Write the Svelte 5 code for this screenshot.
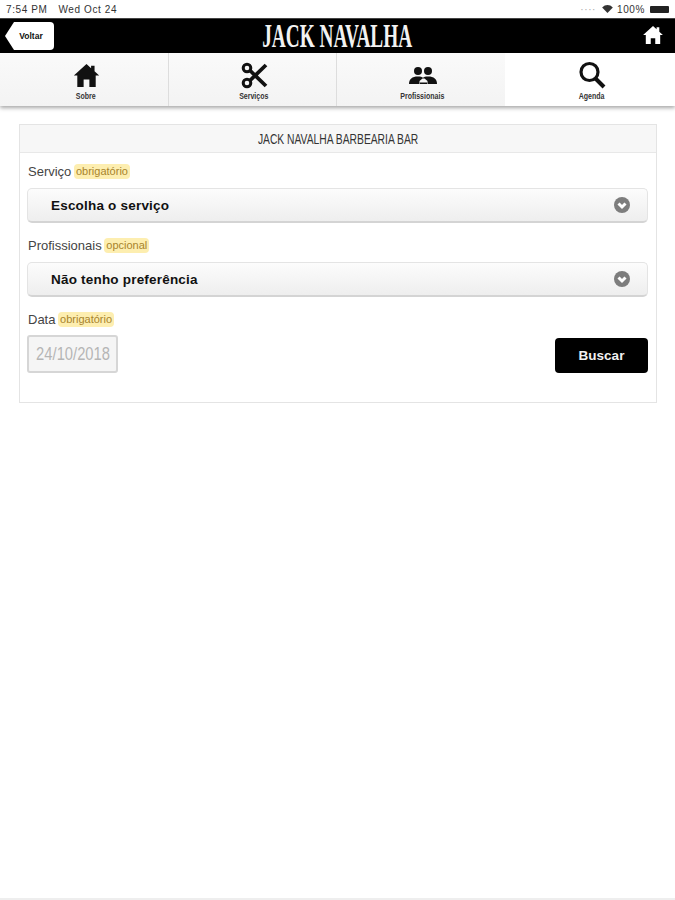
<script>
  const tabs = [
    { label: 'Sobre', icon: 'home' },
    { label: 'Serviços', icon: 'scissors' },
    { label: 'Profissionais', icon: 'people' },
    { label: 'Agenda', icon: 'search' }
  ];
  const selects = [
    { label: 'Serviço', tag: 'obrigatório', value: 'Escolha o serviço' },
    { label: 'Profissionais', tag: 'opcional', value: 'Não tenho preferência' }
  ];
</script>

<div class="page">
  <div class="status">
    <div class="status-left"><span>7:54 PM</span><span>Wed Oct 24</span></div>
    <div class="status-right">
      <span class="dots">····</span>
      <svg width="11" height="8" viewBox="0 0 12 9"><path d="M6 9 0 2.800C3.500-.9 8.500-.9 12 2.800Z" fill="#333" /></svg>
      <span>100%</span>
      <span class="battery"></span>
    </div>
  </div>

  <header class="topbar">
    <button class="back">Voltar</button>
    <div class="logo"><span>JACK NAVALHA</span></div>
    <svg class="top-home" width="22" height="18" viewBox="0 0 22 20"><path d="M11 0 0 10h3v10h5.500v-6.500h5V20H19V10h3l-4-3.600V1.500h-3v2.200Z" fill="#fff" /></svg>
  </header>

  <nav class="tabs">
    {#each tabs as tab, i}
      <div class="tab" class:active={i === 3} class:last={i === 2}>
        {#if tab.icon === 'home'}
          <svg class="home" width="27" height="23" viewBox="0 0 22 20"><path d="M11 0 0 10h3v10h5.500v-6.500h5V20H19V10h3l-4-3.600V1.500h-3v2.200Z" fill="#111" /></svg>
        {:else if tab.icon === 'scissors'}
          <svg width="27" height="27" viewBox="0 0 27 27" fill="none" stroke="#111"><circle cx="6" cy="6" r="3.800" stroke-width="3" /><circle cx="6" cy="21" r="3.800" stroke-width="3" /><path d="M9 8.500 25 24M9 18.500 25 3" stroke-width="3.800" /></svg>
        {:else if tab.icon === 'people'}
          <svg class="people" width="28" height="18" viewBox="0 0 28 18" fill="#111"><circle cx="9" cy="4" r="4" /><circle cx="19" cy="4" r="4" /><path d="M0 17c0-5 3-7.500 9-7.500 2.500 0 4 .5 5 1.300 1-.8 2.500-1.300 5-1.300 6 0 9 2.500 9 7.500h-9.500v-3l-3-2.500h-2l-3 2.500V17z M11 17v-1.500h7V17Z" /></svg>
        {:else}
          <svg width="28" height="28" viewBox="0 0 28 28" fill="none" stroke="#111"><circle cx="11.500" cy="11" r="8.500" stroke-width="3.200" /><path d="m17.500 17.500 8.500 8.500" stroke-width="4" /></svg>
        {/if}
        <span class="tab-label"><span>{tab.label}</span></span>
      </div>
    {/each}
  </nav>

  <main class="content">
    <section class="card">
      <div class="card-head"><span>JACK NAVALHA BARBEARIA BAR</span></div>
      <div class="card-body">
        {#each selects as s}
          <div class="field-label">{s.label} <span class="tag">{s.tag}</span></div>
          <div class="select">
            <span>{s.value}</span>
            <svg width="16" height="16" viewBox="0 0 16 16"><circle cx="8" cy="8" r="8" fill="#7d7d7d" /><path d="M4.500 6.500 8 10 11.500 6.500" fill="none" stroke="#fff" stroke-width="3" /></svg>
          </div>
        {/each}
        <div class="field-label">Data <span class="tag">obrigatório</span></div>
        <div class="bottom-row">
          <div class="date"><span>24/10/2018</span></div>
          <button class="search">Buscar</button>
        </div>
      </div>
    </section>
  </main>
</div>

<style>
  :global(body) { margin: 0; background: #fff; }
  .page {
    width: 675px;
    height: 900px;
    overflow: hidden;
    font-family: "Liberation Sans", Arial, sans-serif;
    color: #111;
    background: #fff;
    box-sizing: border-box;
    border-bottom: 2px solid #eee;
  }
  .status {
    height: 18px;
    padding: 0 6px 0 6px;
    display: flex;
    align-items: center;
    justify-content: space-between;
    font-size: 10px;
    letter-spacing: .6px;
    color: #333;
    box-sizing: border-box;
  }
  .status-left { display: flex; gap: 11px; }
  .status-right { display: flex; align-items: center; gap: 4px; }
  .dots { color: #aaa; margin-right: 2px; }
  .battery { width: 19px; height: 7px; background: #222; border-radius: 1px; margin-left: 1px; }
  .topbar {
    height: 35px;
    background: #000;
    display: flex;
    align-items: center;
    justify-content: center;
    position: relative;
    border-top: 1px solid #444;
    box-sizing: border-box;
  }
  .back {
    position: absolute;
    left: 5px;
    top: 3px;
    width: 49px;
    height: 28px;
    border: 0;
    padding: 0 0 0 3px;
    background: #fff;
    border-radius: 4px;
    clip-path: polygon(0 50%, 9px 0, 100% 0, 100% 100%, 9px 100%);
    font: bold 8.500px "Liberation Sans", sans-serif;
    color: #111;
  }
  .logo span {
    display: block;
    color: #f2f2f2;
    font: bold 33px/34px "Liberation Serif", serif;
    transform: scaleX(.585);
    white-space: nowrap;
  }
  .top-home { position: absolute; right: 11px; top: 7px; }
  .tabs {
    display: grid;
    grid-template-columns: 169px 168px 168px 170px;
    height: 53px;
    box-shadow: 0 2px 4px rgba(0,0,0,.35);
  }
  .tab {
    background: linear-gradient(#fafafa, #f3f3f3);
    border-right: 1px solid #ddd;
    display: flex;
    flex-direction: column;
    align-items: center;
    justify-content: flex-end;
    gap: 1px;
    padding: 0 0 4px 3px;
    box-sizing: border-box;
  }
  .tab.last { border-right: 0; }
  .tab.active { background: #fff; border-right: 0; }
  .people { margin-bottom: 4px; }
  .home { margin-bottom: 2px; margin-left: 1px; }
  .tab-label {
    font-size: 9px;
    font-weight: bold;
    line-height: 12px;
    color: #333;
  }
  .tab-label span { display: inline-block; transform: scaleX(.78); white-space: nowrap; }
  .content { padding: 18px 18px 0 19px; }
  .card {
    border: 1px solid #e4e4e4;
    height: 279px;
    box-sizing: border-box;
  }
  .card-head {
    height: 28px;
    background: #f7f7f7;
    border-bottom: 1px solid #e8e8e8;
    display: flex;
    align-items: center;
    justify-content: center;
    font-size: 14px;
    color: #333;
    box-sizing: border-box;
  }
  .card-head span { display: inline-block; transform: scaleX(.735); white-space: nowrap; }
  .card-body { padding: 11px 8px 0 7px; }
  .field-label {
    font-size: 13px;
    line-height: 16px;
    color: #444;
    height: 16px;
    margin-bottom: 8px;
    padding-left: 1px;
  }
  .tag {
    display: inline-block;
    font-size: 11px;
    line-height: 15px;
    padding: 0 2px;
    margin-left: -1px;
    color: #a8842c;
    background: #fdeeb0;
    border-radius: 4px;
    vertical-align: 1px;
  }
  .select {
    height: 35px;
    box-sizing: border-box;
    margin-bottom: 15px;
    padding: 0 17px 0 23px;
    display: flex;
    align-items: center;
    justify-content: space-between;
    background: linear-gradient(#fcfcfc, #eeeeee);
    border: 1px solid #e4e4e4;
    border-bottom: 2px solid #d4d4d4;
    border-radius: 5px;
    font-size: 13.500px;
    font-weight: bold;
    letter-spacing: .2px;
    color: #111;
  }
  .bottom-row {
    display: flex;
    align-items: flex-start;
    justify-content: space-between;
    margin-top: -1px;
  }
  .date {
    width: 91px;
    height: 38px;
    box-sizing: border-box;
    background: #f5f5f5;
    border: 2px solid #d6d6d6;
    border-radius: 3px;
    display: flex;
    align-items: center;
    justify-content: center;
    padding-left: 1px;
    font-size: 18px;
    color: #b5b5b5;
  }
  .date span { display: inline-block; transform: scaleX(.82); white-space: nowrap; }
  .search {
    width: 93px;
    height: 35px;
    margin-top: 3px;
    border: 0;
    border-radius: 4px;
    background: #000;
    color: #f1f1f1;
    font: bold 13.500px "Liberation Sans", sans-serif;
  }
</style>
